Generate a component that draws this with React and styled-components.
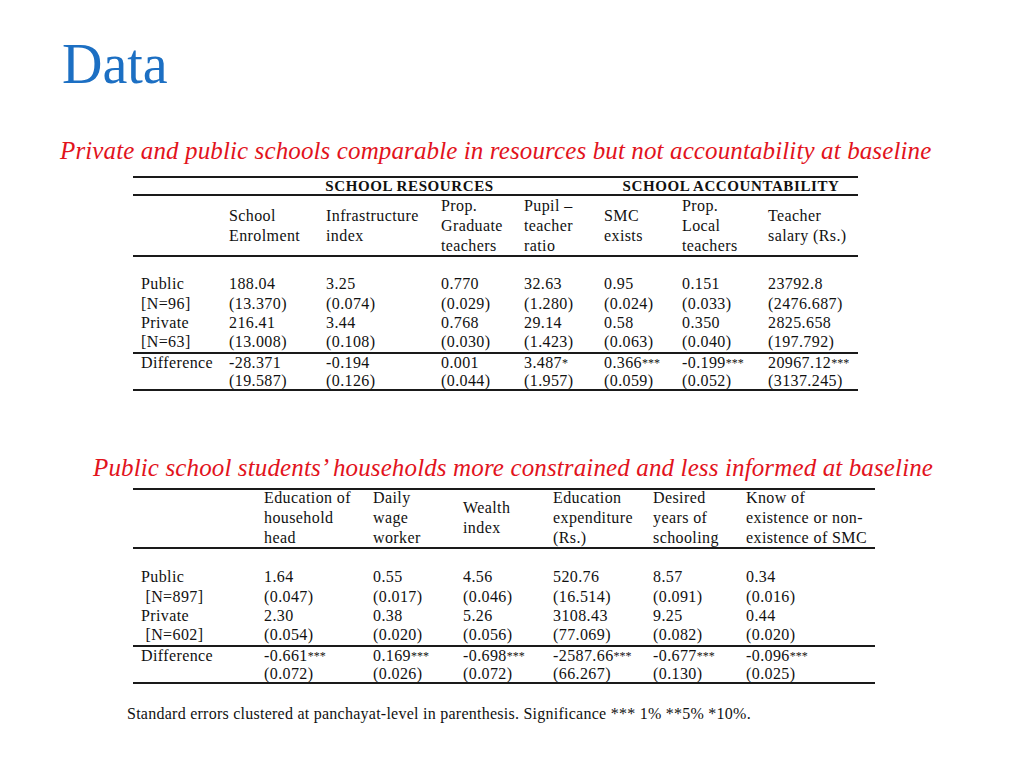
import React from "react";
import styled, { createGlobalStyle } from "styled-components";

const GlobalStyle = createGlobalStyle`
  html, body {
    margin: 0;
    padding: 0;
    background: #ffffff;
  }
  body {
    font-family: "Liberation Serif", "Times New Roman", serif;
    color: #111111;
  }
`;

const Slide = styled.div`
  width: 1024px;
  height: 768px;
  padding-top: 37px;
  box-sizing: border-box;
  overflow: hidden;
`;

const Title = styled.h1`
  margin: 0 0 0 62px;
  font-size: 56px;
  line-height: 55px;
  font-weight: normal;
  color: #1c6fc3;
`;

const Caption = styled.div`
  margin-top: ${(p) => p.$top}px;
  padding-left: ${(p) => p.$left}px;
  font-size: 25px;
  line-height: 30px;
  font-style: italic;
  color: #e2131c;
  letter-spacing: ${(p) => p.$spacing}px;
  white-space: nowrap;
`;

const Grid = styled.div`
  display: grid;
  grid-template-columns: ${(p) => p.$cols.map((c) => c + "px").join(" ")};
  margin-top: ${(p) => p.$top}px;
  margin-left: 133px;
  font-size: 16px;
  letter-spacing: 0.4px;
  color: #111111;
`;

const Rule = styled.div`
  grid-column: 1 / -1;
  height: 2px;
  background: #1a1a1a;
`;

const Gap = styled.div`
  grid-column: 1 / -1;
  height: ${(p) => p.$h}px;
`;

const GroupCell = styled.div`
  grid-column: span ${(p) => p.$span || 1};
  height: 16px;
  padding-right: ${(p) => p.$padRight || 0}px;
  font-size: 15px;
  line-height: 16px;
  letter-spacing: 0.6px;
  font-weight: bold;
  text-align: center;
  white-space: nowrap;
`;

const HeadCell = styled.div`
  height: ${(p) => p.$h}px;
  display: flex;
  flex-direction: column;
  justify-content: center;
  line-height: 20px;
  white-space: nowrap;
`;

const Cell = styled.div`
  padding-left: ${(p) => (p.$label ? 8 : 0)}px;
  height: ${(p) => p.$h}px;
  line-height: ${(p) => p.$lh}px;
  white-space: nowrap;
`;

const Stars = styled.span`
  font-size: 12px;
  letter-spacing: 0;
  vertical-align: 1px;
`;

const Note = styled.div`
  margin-top: 20px;
  padding-left: 127px;
  font-size: 16px;
  line-height: 20px;
  letter-spacing: 0.25px;
  color: #111111;
  white-space: nowrap;
`;

const schoolCols = [96, 97, 115, 83, 80, 78, 86, 90];

const schoolHeads = [
  [],
  ["School", "Enrolment"],
  ["Infrastructure", "index"],
  ["Prop.", "Graduate", "teachers"],
  ["Pupil –", "teacher", "ratio"],
  ["SMC", "exists"],
  ["Prop.", "Local", "teachers"],
  ["Teacher", "salary (Rs.)"],
];

const schoolRows = [
  ["Public", "188.04", "3.25", "0.770", "32.63", "0.95", "0.151", "23792.8"],
  ["[N=96]", "(13.370)", "(0.074)", "(0.029)", "(1.280)", "(0.024)", "(0.033)", "(2476.687)"],
  ["Private", "216.41", "3.44", "0.768", "29.14", "0.58", "0.350", "2825.658"],
  ["[N=63]", "(13.008)", "(0.108)", "(0.030)", "(1.423)", "(0.063)", "(0.040)", "(197.792)"],
];

const schoolDiff = [
  ["Difference", "-28.371", "-0.194", "0.001", "3.487*", "0.366***", "-0.199***", "20967.12***"],
  ["", "(19.587)", "(0.126)", "(0.044)", "(1.957)", "(0.059)", "(0.052)", "(3137.245)"],
];

const houseCols = [131, 109, 90, 90, 100, 93, 129];

const houseHeads = [
  [],
  ["Education of", "household", "head"],
  ["Daily", "wage", "worker"],
  ["Wealth", "index"],
  ["Education", "expenditure", "(Rs.)"],
  ["Desired", "years of", "schooling"],
  ["Know of", "existence or non-", "existence of SMC"],
];

const houseRows = [
  ["Public", "1.64", "0.55", "4.56", "520.76", "8.57", "0.34"],
  ["\u00a0[N=897]", "(0.047)", "(0.017)", "(0.046)", "(16.514)", "(0.091)", "(0.016)"],
  ["Private", "2.30", "0.38", "5.26", "3108.43", "9.25", "0.44"],
  ["\u00a0[N=602]", "(0.054)", "(0.020)", "(0.056)", "(77.069)", "(0.082)", "(0.020)"],
];

const houseDiff = [
  ["Difference", "-0.661***", "0.169***", "-0.698***", "-2587.66***", "-0.677***", "-0.096***"],
  ["", "(0.072)", "(0.026)", "(0.072)", "(66.267)", "(0.130)", "(0.025)"],
];

// row heights: plain rows, then the Difference row and its standard-error row
const BODY = { h: 19.33, lh: 19.33 };
const DIFF = [
  { h: 18.5, lh: 18.5 },
  { h: 16.5, lh: 17.5 },
];

// numbers like 0.366*** get smaller significance stars
function Value({ text }) {
  const m = text.match(/^(.*?)(\*+)$/);
  if (!m) return text;
  return (
    <>
      {m[1]}
      <Stars>{m[2]}</Stars>
    </>
  );
}

function Heads({ heads, h }) {
  return heads.map((lines, i) => (
    <HeadCell key={i} $h={h}>
      {lines.map((l) => (
        <span key={l}>{l}</span>
      ))}
    </HeadCell>
  ));
}

function Rows({ rows, sizes }) {
  return rows.map((r, i) => {
    const s = sizes ? sizes[i] : BODY;
    return r.map((v, j) => (
      <Cell key={i + "-" + j} $label={j === 0} $h={s.h} $lh={s.lh}>
        <Value text={v} />
      </Cell>
    ));
  });
}

function SchoolTable() {
  return (
    <Grid $cols={schoolCols} $top={10}>
      <Rule />
      <GroupCell />
      <GroupCell $span={4} $padRight={14}>
        SCHOOL RESOURCES
      </GroupCell>
      <GroupCell $span={3}>SCHOOL ACCOUNTABILITY</GroupCell>
      <Rule />
      <Heads heads={schoolHeads} h={59} />
      <Rule />
      <Gap $h={17.25} />
      <Rows rows={schoolRows} />
      <Rule />
      <Rows rows={schoolDiff} sizes={DIFF} />
      <Rule />
    </Grid>
  );
}

function HouseTable() {
  return (
    <Grid $cols={houseCols} $top={5.4}>
      <Rule />
      <Heads heads={houseHeads} h={57} />
      <Rule />
      <Gap $h={18.25} />
      <Rows rows={houseRows} />
      <Rule />
      <Rows rows={houseDiff} sizes={DIFF} />
      <Rule />
    </Grid>
  );
}

export default function App() {
  return (
    <>
      <GlobalStyle />
      <Slide>
        <Title>Data</Title>
        <Caption $top={44} $left={60} $spacing={0.12}>
          Private and public schools comparable in resources but not accountability at baseline
        </Caption>
        <SchoolTable />
        <Caption $top={62} $left={93} $spacing={0.13}>
          Public school students’ households more constrained and less informed at baseline
        </Caption>
        <HouseTable />
        <Note>
          Standard errors clustered at panchayat-level in parenthesis. Significance *** 1% **5% *10%.
        </Note>
      </Slide>
    </>
  );
}
